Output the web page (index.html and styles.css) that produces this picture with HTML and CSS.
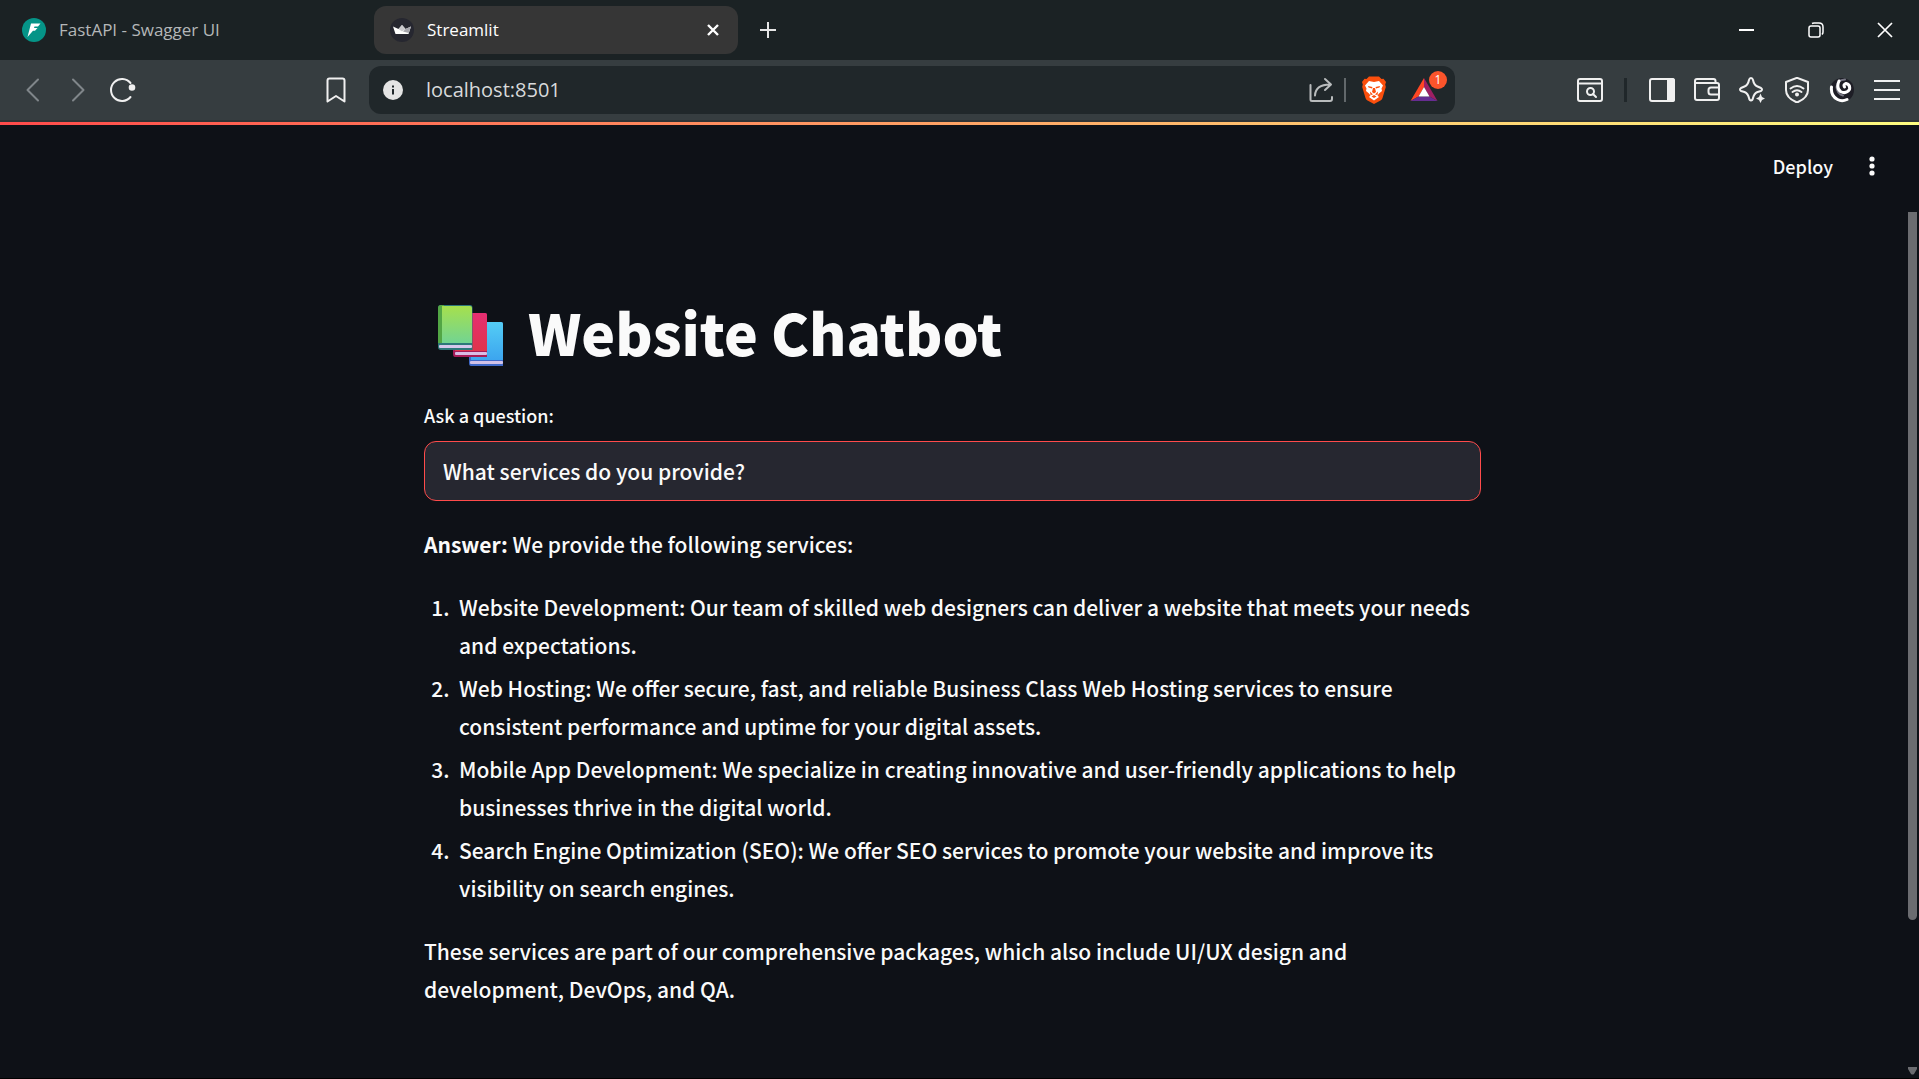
FILE: index.html
```html
<!DOCTYPE html>
<html lang="en">
<head>
  <meta charset="UTF-8">
  <meta name="viewport" content="width=device-width, initial-scale=1">
  <title>Streamlit</title>
  <link rel="stylesheet" href="styles.css">
</head>
<body>

  <!-- Tab strip -->
  <header class="tab-strip">
    <div class="tab">
      <svg class="favicon" viewBox="0 0 24 24">
        <circle cx="12" cy="12" r="12" fill="#059487"/>
        <path d="M9 5.500H18.500L16 8.500H12.500L12 10H15.500L13 12.800H11L5.500 19Z" fill="#fff"/>
      </svg>
      <span class="tab-title">FastAPI - Swagger UI</span>
    </div>
    <div class="tab active">
      <svg class="favicon" viewBox="0 0 24 24">
        <circle cx="12" cy="12" r="12" fill="#262730"/>
        <path d="M3 8.500L8.500 11L12 7L15.500 11L21 8.500L18.500 16H5.500Z" fill="#fff"/>
        <path d="M12 7L15.500 11L12 13.500L8.500 11Z" fill="#c9c9cd"/>
        <path d="M21 8.500L15.500 11L13 13.500L18.700 15Z" fill="#a5a5ac"/>
      </svg>
      <span class="tab-title">Streamlit</span>
      <button class="tab-close" aria-label="Close tab">
        <svg width="12" height="12" viewBox="0 0 12 12"><path d="M1 1L11 11M11 1L1 11" stroke="#fff" stroke-width="2.400"/></svg>
      </button>
    </div>
    <button class="new-tab" aria-label="New tab">
      <svg width="16" height="16" viewBox="0 0 16 16"><path d="M8 0V16M0 8H16" stroke="#e6e6e6" stroke-width="2"/></svg>
    </button>
    <div class="window-controls">
      <button aria-label="Minimize">
        <svg width="16" height="16" viewBox="0 0 16 16"><path d="M0 8H15" stroke="#fff" stroke-width="2"/></svg>
      </button>
      <button aria-label="Restore">
        <svg width="16" height="16" viewBox="0 0 16 16" fill="none" stroke="#fff" stroke-width="1.500"><rect x="1" y="4" width="11" height="11" rx="2"/><path d="M4 1.500Q5 1 6 1H11Q15 1 15 5V10Q15 11.500 14 12.500"/></svg>
      </button>
      <button aria-label="Close">
        <svg width="16" height="16" viewBox="0 0 16 16"><path d="M1 1L15 15M15 1L1 15" stroke="#fff" stroke-width="1.700"/></svg>
      </button>
    </div>
  </header>

  <!-- Toolbar -->
  <nav class="toolbar">
    <div class="nav-buttons">
      <button class="dim" aria-label="Back">
        <svg viewBox="0 0 26 26"><path d="M18 2.500L7.500 13L18 23.500"/></svg>
      </button>
      <button class="dim" aria-label="Forward">
        <svg viewBox="0 0 26 26"><path d="M8 2.500L18.500 13L8 23.500"/></svg>
      </button>
      <button aria-label="Reload">
        <svg viewBox="0 0 26 26"><path d="M20.500 20A11 11 0 1 1 20.500 6"/><circle cx="22" cy="10.500" r="2.300" class="solid"/></svg>
      </button>
      <button class="bookmark" aria-label="Bookmark">
        <svg viewBox="0 0 26 26"><path d="M4.500 3.500Q4.500 1.500 6.500 1.500H19.500Q21.500 1.500 21.500 3.500V24.500L13 19L4.500 24.500Z"/></svg>
      </button>
    </div>

    <div class="address-bar">
      <svg class="info" viewBox="0 0 20 20">
        <circle cx="10" cy="10" r="10" fill="#e4e4e4"/>
        <path d="M10 9V14.500M10 5.500V7.500" stroke="#20272a" stroke-width="2"/>
      </svg>
      <input class="url" type="text" value="localhost:8501" aria-label="Address">
      <button aria-label="Share">
        <svg viewBox="0 0 26 26" class="soft"><path d="M2.500 8V22.500Q2.500 24 4 24H22Q24 24 24 22V20"/><path d="M7 18.500Q7.500 7.500 22 7.500M17 2L23 7.500L17 13"/></svg>
      </button>
      <span class="divider"></span>
      <button class="brave" aria-label="Brave Shields">
        <svg viewBox="0 0 26 28">
          <path class="plain" fill="#fb4f0d" d="M8 .5H18L20.500 3L22.500 2.700L25 6L24.200 8.500L24.800 11L21.500 22Q21 23.500 19.500 24.500L13 28L6.500 24.500Q5 23.500 4.500 22L1.200 11L1.800 8.500L1 6L3.500 2.700L5.500 3Z"/>
          <path class="plain" fill="#fff" d="M8 5L13 6L18 5L22 9.500L20.500 12.500L21 15L18 17.500L16.500 19.500L18 21L13 24.500L8 21L9.500 19.500L8 17.500L5 15L5.500 12.500L4 9.500Z"/>
          <path class="plain" fill="#fb4f0d" d="M7 10L11.500 11L11 12.500L7.500 11.500ZM19 10L14.500 11L15 12.500L18.500 11.500ZM12 12H14L15 16L13 17.500L11 16ZM9 15.500L12 18.500L9.500 19ZM17 15.500L14 18.500L16.500 19ZM10.500 20.500L13 19L15.500 20.500L13 22Z"/>
        </svg>
      </button>
      <button class="rewards" aria-label="Brave Rewards">
        <svg viewBox="0 0 28 24">
          <path class="plain" fill="#ff4724" d="M14 0V9L8.500 18.500L.500 23Z"/>
          <path class="plain" fill="#9e1f63" d="M14 0L27.500 23L19.500 18.500L14 9Z"/>
          <path class="plain" fill="#662d91" d="M.500 23L8.500 18.500H19.500L27.500 23Z"/>
          <path class="plain" fill="#fff" d="M14 9L19.500 18.500H8.500Z"/>
        </svg>
        <span class="badge">1</span>
      </button>
    </div>

    <div class="tools">
      <button aria-label="Search in page">
        <svg viewBox="0 0 26 26"><rect x="1" y="2" width="24" height="22" rx="2"/><path d="M1 6.500H25M16 17L19 20"/><circle cx="13.500" cy="14.500" r="3.500"/></svg>
      </button>
      <span class="tool-divider"></span>
      <button aria-label="Sidebar">
        <svg viewBox="0 0 26 26"><rect x="1" y="2" width="24" height="22" rx="2"/><path class="solid" d="M19 2H23.500Q25 2 25 3.500V22.500Q25 24 23.500 24H19Z"/></svg>
      </button>
      <button aria-label="Wallet">
        <svg viewBox="0 0 26 26"><path d="M21.500 6V4Q21.500 2 19.500 2H3Q1 2 1 4V21Q1 23 3 23H23Q25 23 25 21V8Q25 6 23 6H1M25 10.500H17Q14.500 10.500 14.500 13V15Q14.500 17.500 17 17.500H25"/></svg>
      </button>
      <button aria-label="Leo AI">
        <svg viewBox="0 0 26 26"><path d="M12 1Q13.500 1 14 3Q15 8 18.500 9.500L22 11Q24 12.500 22 14L18.500 15Q15 16.500 14 21Q13.500 23.500 12 23.500T10 21Q9 16.500 5.500 15L2 14Q0 12.500 2 11L5.500 9.500Q9 8 10 3Q10.500 1 12 1Z"/><path class="solid plain" d="M21.500 16.500L23 20L26 21.500L23 23L21.500 26L20 23L17 21.500L20 20Z"/></svg>
      </button>
      <button aria-label="VPN">
        <svg viewBox="0 0 26 26"><path d="M13 .800L24 5V13Q24 21 13 25.500Q2 21 2 13V5Z"/><path d="M6.500 11.500Q13 6.500 19.500 11.500M8.500 15Q13 11.500 17.500 15"/><circle class="solid" cx="13" cy="17.500" r="1"/></svg>
      </button>
      <button aria-label="Profile">
        <svg viewBox="0 0 26 26">
          <circle class="plain" cx="13" cy="13" r="12" fill="#1e1e26"/>
          <path class="swirl-shade" d="M16 2.500Q8 3 7.500 10Q8 17 14 18.500"/>
          <path class="swirl" d="M2.500 10Q1.500 19 8.500 22.500Q13 25 18 22.500M10 4Q7 11 11.500 14.500Q17 17.500 20.500 12.500Q21.500 7.500 17 6.500Q14 7.500 15.500 10"/>
        </svg>
      </button>
      <button aria-label="Menu">
        <svg viewBox="0 0 26 26"><path d="M.500 4H25.500M.500 13H25.500M.500 22H25.500"/></svg>
      </button>
    </div>
  </nav>

  <div class="decoration"></div>

  <!-- Streamlit app -->
  <div class="app-header">
    <button class="deploy">Deploy</button>
    <button class="app-menu" aria-label="Main menu">
      <svg width="6" height="20" viewBox="0 0 6 20" fill="#fafafa"><circle cx="3" cy="3" r="2.600"/><circle cx="3" cy="10" r="2.600"/><circle cx="3" cy="17" r="2.600"/></svg>
    </button>
  </div>

  <div class="app">
    <main class="scroll-area">
      <div class="block-container">
        <h1>
          <svg class="books" viewBox="0 0 66 62" aria-hidden="true">
            <defs>
              <linearGradient id="green" x2="0" y2="1"><stop stop-color="#a6e04d"/><stop offset="1" stop-color="#72d492"/></linearGradient>
              <linearGradient id="red" x2="0" y2="1"><stop stop-color="#e52e72"/><stop offset="1" stop-color="#df344b"/></linearGradient>
              <linearGradient id="blue" x2="0" y2="1"><stop stop-color="#54cdf5"/><stop offset="1" stop-color="#3ca5ef"/></linearGradient>
            </defs>
            <path d="M31 17H63Q65 17 65 19V61H33Q31 61 31 58Z" fill="#3f69c9"/>
            <path d="M33 17H63Q65 17 65 19V55H33Z" fill="url(#blue)"/>
            <rect x="32" y="56" width="33" height="3" rx="1" fill="#d1c2e8"/>
            <path d="M15 8H47Q49 8 49 10V52H17Q15 52 15 49Z" fill="#a61c58"/>
            <path d="M17 8H47Q49 8 49 10V46H17Z" fill="url(#red)"/>
            <rect x="17" y="47" width="32" height="3" rx="1" fill="#d8bce5"/>
            <path d="M0 3Q0 0 3 0H32Q34.500 0 34.500 3V45H3Q0 45 0 42Z" fill="#2d7779"/>
            <path d="M0 3Q0 0 3 0H6V38H0Z" fill="#52a645"/>
            <path d="M4 1H32Q34 1 34 3V38H4Z" fill="url(#green)"/>
            <rect x="1" y="40" width="33" height="3" rx="1" fill="#d5c7eb"/>
          </svg>
          <span>Website Chatbot</span>
        </h1>

        <label for="question">Ask a question:</label>
        <input class="question" id="question" type="text" value="What services do you provide?">

        <div class="answer">
          <p><strong>Answer:</strong> We provide the following services:</p>
          <ol>
            <li>Website Development: Our team of skilled web designers can deliver a website that meets your needs and expectations.</li>
            <li>Web Hosting: We offer secure, fast, and reliable Business Class Web Hosting services to ensure consistent performance and uptime for your digital assets.</li>
            <li>Mobile App Development: We specialize in creating innovative and user-friendly applications to help businesses thrive in the digital world.</li>
            <li>Search Engine Optimization (SEO): We offer SEO services to promote your website and improve its visibility on search engines.</li>
          </ol>
          <p>These services are part of our comprehensive packages, which also include UI/UX design and development, DevOps, and QA.</p>
        </div>
      </div>
    </main>
    <div class="scrollbar">
      <div class="thumb"></div>
      <svg class="arrow" viewBox="0 0 9 8"><path d="M0 0H9V2L6 7Q4.500 8 3 7L0 2Z" fill="#6b6c70"/></svg>
    </div>
  </div>

</body>
</html>
```

FILE: styles.css
```css
* {
  box-sizing: border-box;
}

body {
  margin: 0;
  min-height: 100vh;
  display: flex;
  flex-direction: column;
  background-color: #0e1117;
  color: #fafafa;
  font-family: "Noto Sans CJK SC", "Open Sans", sans-serif;
  font-size: 21px;
  font-weight: 500;
  line-height: 38px;
}

button,
input {
  font: inherit;
  color: inherit;
  border: none;
  padding: 0;
  background: none;
}

button {
  display: flex;
  align-items: center;
  justify-content: center;
}

input:focus {
  outline: none;
}

svg {
  display: block;
}

/* Tab strip */
.tab-strip {
  display: flex;
  align-items: center;
  height: 60px;
  padding-left: 6px;
  background-color: #1b2224;
  font-family: "Open Sans", sans-serif;
  font-size: 17px;
  font-weight: 400;
}

.tab {
  display: flex;
  align-items: center;
  gap: 13px;
  flex: 0 1 364px;
  height: 48px;
  padding: 0 19px 0 16px;
  margin-right: 4px;
  border-radius: 12px;
  color: #b4b7b8;
}

.tab.active {
  background-color: #363636;
  color: #fff;
}

.favicon {
  width: 24px;
  height: 24px;
}

.tab-close {
  margin-left: auto;
}

.new-tab {
  width: 52px;
  height: 48px;
}

.window-controls {
  display: flex;
  margin-left: auto;
}

.window-controls button {
  width: 69px;
  height: 60px;
}

/* Toolbar */
.toolbar {
  display: flex;
  align-items: center;
  gap: 11px;
  height: 62px;
  padding: 0 10px;
  background-color: #363d40;
  border-bottom: 2px solid #303436;
}

.toolbar button {
  position: relative;
  width: 45px;
  height: 45px;
}

.toolbar button svg {
  width: 26px;
  height: 26px;
  fill: none;
  stroke: #f0f0f0;
  stroke-width: 2;
  stroke-linecap: round;
  stroke-linejoin: round;
}

.toolbar button .solid {
  fill: #f0f0f0;
}

.toolbar button .plain {
  stroke: none;
}

.toolbar .dim svg {
  stroke: #80868a;
}

.toolbar button .soft {
  stroke: #b9bcbd;
}

.nav-buttons {
  display: flex;
  width: 348px;
}

.nav-buttons .bookmark {
  margin-left: auto;
}

.address-bar {
  display: flex;
  align-items: center;
  flex: 1;
  height: 48px;
  padding: 0 3px 0 14px;
  border-radius: 12px;
  background-color: #20272a;
}

.info {
  width: 20px;
  height: 20px;
}

.url {
  flex: 1;
  min-width: 0;
  margin-left: 23px;
  color: #d8dadb;
  font-family: "Open Sans", sans-serif;
  font-size: 20px;
  font-weight: 400;
}

.divider {
  width: 2px;
  height: 24px;
  margin: 0 5px 0 1px;
  background-color: #62686b;
}

.toolbar .brave svg {
  height: 28px;
}

.toolbar .rewards {
  width: 56px;
}

.toolbar .rewards svg {
  width: 28px;
}

.badge {
  position: absolute;
  top: 3px;
  right: 5px;
  width: 18px;
  height: 18px;
  border-radius: 50%;
  background-color: #fb542b;
  color: #fff;
  font-family: "Open Sans", sans-serif;
  font-size: 12px;
  font-weight: 400;
  line-height: 18px;
}

.tools {
  display: flex;
  align-items: center;
  justify-content: flex-end;
  width: 443px;
}

.tool-divider {
  width: 3px;
  height: 24px;
  margin: 0 12px;
  background-color: #20272a;
}

.toolbar button .swirl {
  stroke: #fff;
  stroke-width: 3;
}

.toolbar button .swirl-shade {
  stroke: #777784;
  stroke-width: 2;
}

.decoration {
  height: 3px;
  background: linear-gradient(90deg, #ff4b4b, #fffd80);
}

/* Streamlit app */
.app-header {
  display: flex;
  align-items: center;
  justify-content: flex-end;
  gap: 20px;
  height: 82px;
  padding-right: 28px;
}

.deploy {
  font-size: 18px;
}

.app-menu {
  width: 38px;
  height: 38px;
}

.app {
  display: flex;
  flex: 1;
  border-bottom: 1px solid #000;
}

.scroll-area {
  flex: 1;
}

.block-container {
  max-width: 1105px;
  margin: 0 auto;
  padding: 88px 24px 24px;
}

h1 {
  display: flex;
  align-items: flex-end;
  gap: 24px;
  margin: 0 0 34px;
  padding-left: 14px;
  font-size: 57px;
  font-weight: 900;
  line-height: 72px;
}

.books {
  width: 66px;
  height: 62px;
}

label {
  display: block;
  margin-bottom: 12px;
  font-size: 18px;
  line-height: 28px;
}

.question {
  display: block;
  width: 100%;
  height: 60px;
  padding: 0 18px;
  border: 1px solid #ff4b4b;
  border-radius: 12px;
  background-color: #262730;
}

.answer {
  margin-top: 24px;
}

.answer p {
  margin: 0;
}

ol {
  margin: 25px 0;
  padding-left: 35px;
}

li + li {
  margin-top: 5px;
}

li::marker {
  content: counter(list-item) ".\a0\a0";
}

.scrollbar {
  display: flex;
  flex-direction: column;
  align-items: center;
  justify-content: space-between;
  width: 14px;
  padding: 5px 0 3px;
}

.thumb {
  width: 9px;
  height: 82%;
  border-radius: 0 0 5px 5px;
  background-color: #6b6c70;
}

.arrow {
  width: 9px;
  height: 8px;
}
```
